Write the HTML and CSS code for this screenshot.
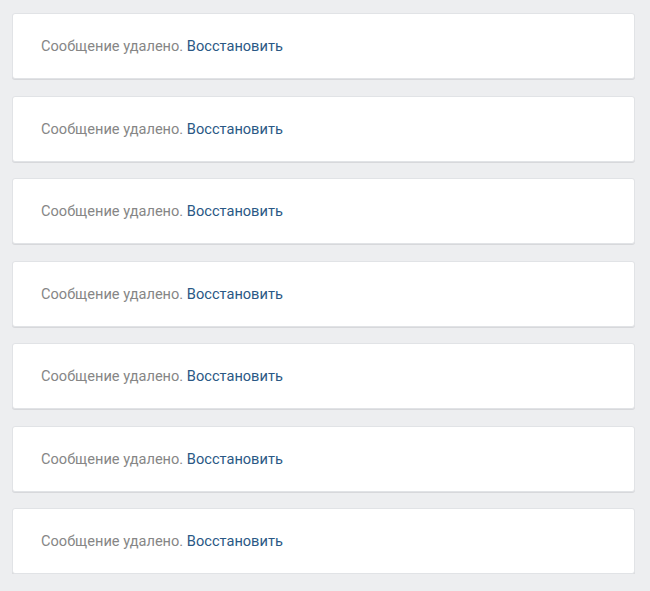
FILE: index.html
```html
<!DOCTYPE html>
<html lang="ru">
<head>
<meta charset="UTF-8">
<title>Сообщения</title>
<link rel="stylesheet" href="styles.css">
</head>
<body>
<div class="list">
    <div class="card"><p class="note"><span class="deleted">Сообщение удалено.</span> <a class="restore" href="#">Восстановить</a></p></div>
    <div class="card"><p class="note"><span class="deleted">Сообщение удалено.</span> <a class="restore" href="#">Восстановить</a></p></div>
    <div class="card"><p class="note"><span class="deleted">Сообщение удалено.</span> <a class="restore" href="#">Восстановить</a></p></div>
    <div class="card"><p class="note"><span class="deleted">Сообщение удалено.</span> <a class="restore" href="#">Восстановить</a></p></div>
    <div class="card"><p class="note"><span class="deleted">Сообщение удалено.</span> <a class="restore" href="#">Восстановить</a></p></div>
    <div class="card"><p class="note"><span class="deleted">Сообщение удалено.</span> <a class="restore" href="#">Восстановить</a></p></div>
    <div class="card"><p class="note"><span class="deleted">Сообщение удалено.</span> <a class="restore" href="#">Восстановить</a></p></div>
</div>
</body>
</html>
```

FILE: styles.css
```css
body {
    margin: 0;
    background-color: #edeef0;
    font-family: Roboto, 'Liberation Sans', sans-serif;
    font-size: 14.6px;
}
.list {
    display: flex;
    flex-direction: column;
    gap: 16.5px;
    padding: 13px 15px 0 12px;
}
.card {
    height: 64px;
    display: flex;
    align-items: center;
    padding-left: 28px;
    background: #fff;
    border: 1px solid #e1e3e6;
    border-radius: 3px;
    box-shadow: 0 1px 0 0 #d7d8db;
}
.note {
    margin: 0;
}
.deleted {
    color: #868686;
}
.restore {
    color: #2a5885;
    text-decoration: none;
}
```
